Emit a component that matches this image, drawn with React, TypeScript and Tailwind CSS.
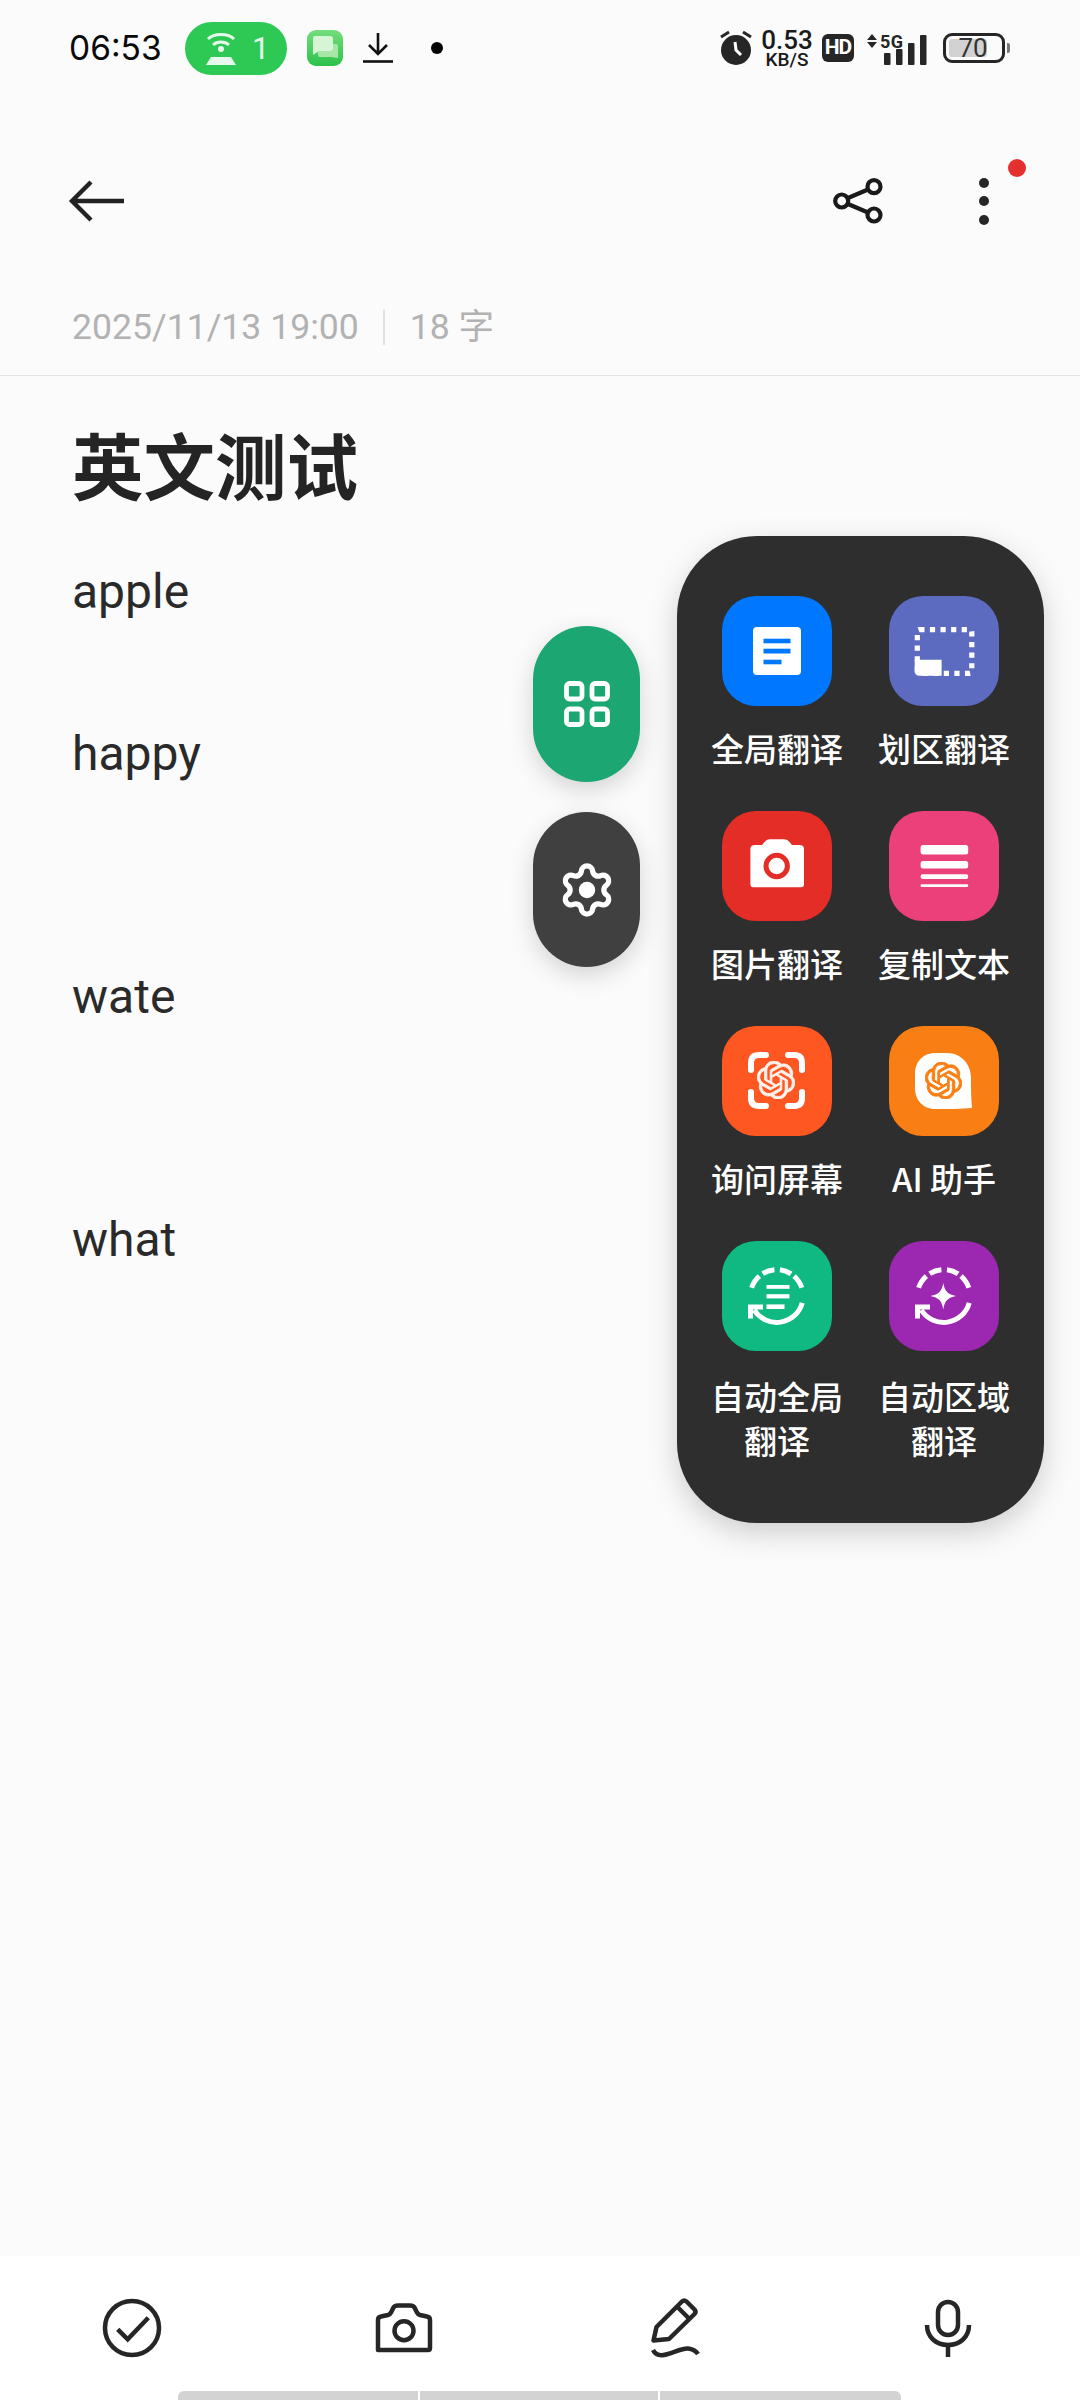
import React from "react";
import { SiOpenai } from "react-icons/si";

const R = 26.4;
function pt(a: number) {
  const t = (a * Math.PI) / 180;
  return `${(54.7 + R * Math.sin(t)).toFixed(2)} ${(55 - R * Math.cos(t)).toFixed(2)}`;
}
function arc(a: number, b: number) {
  const large = Math.abs(b - a) > 180 ? 1 : 0;
  return `M${pt(a)} A${R} ${R} 0 ${large} 1 ${pt(b)}`;
}

function AutoRing() {
  return (
    <g fill="none" stroke="#fff" strokeWidth="5">
      <path d={arc(-72, -41)} />
      <path d={arc(-32, -5)} />
      <path d={arc(7, 33)} />
      <path d={arc(41, 72)} />
      <path d={arc(105, 238)} />
      <path d="M28.5 77.5 V66 H41" strokeWidth="5" />
    </g>
  );
}

function Tile({ color, children }: { color: string; children: React.ReactNode }) {
  return (
    <div className={`relative w-[110px] h-[110px] rounded-[34px] flex items-center justify-center ${color}`}>
      <svg viewBox="0 0 110 110" className="absolute inset-0 w-[110px] h-[110px]">
        {children}
      </svg>
    </div>
  );
}

const items: { label: React.ReactNode; two?: boolean; tile: React.ReactNode }[] = [
  {
    label: "全局翻译",
    tile: (
      <Tile color="bg-[#0077ff]">
        <rect x="31" y="31" width="48" height="48" rx="4" fill="#fff" />
        <rect x="41.5" y="42.7" width="27" height="4.6" fill="#0077ff" />
        <rect x="41.5" y="52.7" width="27" height="4.8" fill="#0077ff" />
        <rect x="41.5" y="63.7" width="18" height="4.6" fill="#0077ff" />
      </Tile>
    ),
  },
  {
    label: "划区翻译",
    tile: (
      <Tile color="bg-[#5c6bc0]">
        <rect x="28.3" y="33.7" width="54.5" height="43.6" rx="2" fill="none" stroke="#fff" strokeWidth="5.2" strokeDasharray="5.2 5.4" />
        <path d="M25.7 63.7 H52.6 V79.7 H30.7 Q25.7 79.7 25.7 74.7 Z" fill="#fff" />
      </Tile>
    ),
  },
  {
    label: "图片翻译",
    tile: (
      <Tile color="bg-[#e52d27]">
        <path d="M28.4 38 Q28.4 34 33 34 H40 L43 30.5 Q45 28.3 48 28.3 H62 Q65 28.3 67 30.5 L70 34 H77.5 Q82 34 82 38 V73 Q82 76.3 79 76.3 H31 Q28.4 76.3 28.4 73 Z" fill="#fff" />
        <circle cx="54.7" cy="55" r="10.7" fill="#fff" stroke="#e52d27" strokeWidth="5" />
      </Tile>
    ),
  },
  {
    label: "复制文本",
    tile: (
      <Tile color="bg-[#ec407a]">
        <rect x="31.6" y="34" width="47.6" height="9.4" rx="2.5" fill="#fff" />
        <rect x="31.6" y="50" width="47.6" height="7.4" rx="2.5" fill="#fff" />
        <rect x="31.6" y="63.3" width="47.6" height="4.8" rx="2" fill="#fff" />
        <rect x="31.6" y="73.3" width="47.6" height="2.6" rx="1" fill="#fff" />
      </Tile>
    ),
  },
  {
    label: "询问屏幕",
    tile: (
      <Tile color="bg-[#ff5722]">
        <g fill="none" stroke="#fff" strokeWidth="6" strokeLinecap="round">
          <path d="M29 44 V37 Q29 29 37 29 H44" />
          <path d="M66 29 H72 Q80 29 80 37 V44" />
          <path d="M29 66 V72 Q29 80 37 80 H44" />
          <path d="M66 80 H72 Q80 80 80 72 V66" />
        </g>
        <foreignObject x="35" y="35" width="38" height="38">
          <SiOpenai className="w-[38px] h-[38px] text-[#fff3ee]" stroke="currentColor" strokeWidth={0.5} />
        </foreignObject>
      </Tile>
    ),
  },
  {
    label: "AI 助手",
    tile: (
      <Tile color="bg-[#f97f14]">
        <path d="M46 27 H58 C72 27 82 38 82 52 C82 62 82 72 83 82 C72 83 60 83 46 83 C34 83 26 74 26 62 V48 C26 36 34 27 46 27 Z" fill="#fff" />
        <foreignObject x="36" y="36" width="37" height="37">
          <SiOpenai className="w-[37px] h-[37px] text-[#f97f14]" stroke="currentColor" strokeWidth={0.6} />
        </foreignObject>
      </Tile>
    ),
  },
  {
    two: true,
    label: (
      <>
        自动全局
        <br />
        翻译
      </>
    ),
    tile: (
      <Tile color="bg-[#10b981]">
        <AutoRing />
        <rect x="44.5" y="44" width="23" height="3.8" fill="#fff" />
        <rect x="44.5" y="53.2" width="23" height="4.2" fill="#fff" />
        <rect x="44.5" y="63.4" width="18" height="4.6" fill="#fff" />
      </Tile>
    ),
  },
  {
    two: true,
    label: (
      <>
        自动区域
        <br />
        翻译
      </>
    ),
    tile: (
      <Tile color="bg-[#9c27b0]">
        <AutoRing />
        <path d="M54.3 42 C55.5 50 59 53.6 67 55 C59 56.4 55.5 60 54.3 68.5 C53 60 49.5 56.4 41.5 55 C49.5 53.6 53 50 54.3 42 Z" fill="#fff" />
      </Tile>
    ),
  },
];

function StatusBar() {
  return (
    <div className="h-[96px] flex items-center justify-between pl-[69px] pr-[75px] text-black">
      <div className="flex items-center">
        <span className="text-[33.5px] leading-[48px] w-[93px] whitespace-nowrap font-[Inter,sans-serif] text-[#0a0a0a]">06:53</span>
        <div className="ml-[23px] w-[102px] h-[53px] rounded-full bg-[#2ec955] flex items-center pl-[20px]">
          <svg viewBox="0 0 32 36" className="w-[32px] h-[36px]">
            <g fill="none" stroke="#e7f9ec" strokeWidth="3">
              <path d="M3 9 C9 3 23 3 29 9" />
              <path d="M8 15 C12 11 20 11 24 15" />
            </g>
            <circle cx="16" cy="19" r="3" fill="#e7f9ec" />
            <path d="M6 27 H26 L31 35 H1 Z" fill="#e7f9ec" />
          </svg>
          <span className="ml-[15px] text-[31px] leading-none text-[#e7f9ec] font-[Roboto,sans-serif]">1</span>
        </div>
        <svg viewBox="0 0 36 36" className="ml-[20px] w-[36px] h-[36px]">
          <defs>
            <linearGradient id="chatg" x1="0" y1="0" x2="0" y2="1">
              <stop offset="0" stopColor="#74dd7c" />
              <stop offset="1" stopColor="#2cc24a" />
            </linearGradient>
          </defs>
          <rect width="36" height="36" rx="9" fill="url(#chatg)" />
          <path d="M13 14 H29 Q31 14 31 16 V28 L24 27 H13 Q11 27 11 25 V16 Q11 14 13 14 Z" fill="#a8e6a8" />
          <path d="M8 6 H23 Q26 6 26 9 V18 Q26 21 23 21 H12 L6 25 V9 Q6 6 8 6 Z" fill="#d6f5d4" />
        </svg>
        <svg viewBox="0 0 30 32" className="ml-[20px] w-[30px] h-[32px]">
          <path d="M15 1 V21 M6 13 L15 22 L24 13" fill="none" stroke="#111" strokeWidth="2.6" />
          <path d="M0 29.5 H30" stroke="#111" strokeWidth="2.6" />
        </svg>
        <div className="ml-[38px] w-[12px] h-[12px] rounded-full bg-black" />
      </div>
      <div className="flex items-center">
        <svg viewBox="0 0 36 36" className="w-[36px] h-[36px]">
          <circle cx="18" cy="20" r="15" fill="#262626" />
          <path d="M3 7 L11 2 M33 7 L25 2" stroke="#262626" strokeWidth="3" />
          <path d="M17 12 L18 20 L23 25" stroke="#fff" strokeWidth="3" fill="none" />
        </svg>
        <div className="ml-[7px] w-[52px] flex flex-col items-center font-[Roboto,sans-serif] text-[#1a1a1a] font-medium">
          <span className="text-[26px] leading-[22px] whitespace-nowrap">0.53</span>
          <span className="text-[19px] leading-[17px] whitespace-nowrap">KB/S</span>
        </div>
        <div className="ml-[9px] w-[32px] h-[28px] rounded-[6px] bg-[#262626] flex items-center justify-center text-white text-[21px] font-bold tracking-[-1px] font-[Roboto,sans-serif]">HD</div>
        <svg viewBox="0 -4 62 38" className="ml-[13px] w-[62px] h-[38px]">
          <path d="M5 1 L10 7 H0 Z M5 15 L10 9 H0 Z" fill="#262626" />
          <text x="13" y="15" fontSize="18" fontWeight="700" fill="#262626" fontFamily="Roboto, sans-serif" textLength="23">5G</text>
          <rect x="17" y="20" width="6.5" height="12" rx="1" fill="#262626" />
          <rect x="29" y="16" width="6.5" height="16" rx="1" fill="#262626" />
          <rect x="41" y="10" width="6.5" height="22" rx="1" fill="#262626" />
          <rect x="53" y="2" width="6.5" height="30" rx="1" fill="#262626" />
        </svg>
        <div className="relative ml-[14px] w-[62px] h-[30px] rounded-[9px] border-[3px] border-[#262626] font-[Roboto,sans-serif]">
          <div className="absolute left-[3px] top-[3px] bottom-[3px] w-[38px] bg-[#d2d2d2] rounded-[3px]" />
          <span className="absolute left-[9px] top-0 text-[26px] leading-[24px] text-[#333] w-[36px] text-center">70</span>
          <div className="absolute right-[-8px] top-[7px] w-[3px] h-[10px] bg-[#777] rounded-r-[2px]" />
        </div>
      </div>
    </div>
  );
}

export default function App() {
  return (
    <div className="relative w-[1080px] h-[2400px] overflow-hidden bg-[#fbfbfb] flex flex-col font-[Roboto,'Noto_Sans_CJK_SC',sans-serif] text-[#222]">
      <StatusBar />

      <div className="h-[210px] flex items-center justify-between pl-[66px] pr-[88px]">
        <svg viewBox="0 0 60 44" className="w-[60px] h-[44px]">
          <path d="M58 22 H6 M25 3 L6 22 L25 41" fill="none" stroke="#222" strokeWidth="4.4" />
        </svg>
        <div className="flex items-center">
          <svg viewBox="0 0 56 56" className="w-[56px] h-[56px]">
            <g fill="none" stroke="#1a1a1a" strokeWidth="4.2">
              <circle cx="11.7" cy="28" r="6.5" />
              <circle cx="44" cy="13.7" r="6.5" />
              <circle cx="44" cy="42" r="6.5" />
              <path d="M18 25 L38 16.5 M18 31 L38 39.5" />
            </g>
          </svg>
          <div className="relative ml-[92px] w-[12px] flex flex-col items-center gap-[8.5px] mr-[2px]">
            <div className="w-[10px] h-[10px] rounded-full bg-[#262626]" />
            <div className="w-[10px] h-[10px] rounded-full bg-[#262626]" />
            <div className="w-[10px] h-[10px] rounded-full bg-[#262626]" />
            <div className="absolute left-[30px] top-[-19px] w-[18px] h-[18px] rounded-full bg-[#e53030]" />
          </div>
        </div>
      </div>

      <div className="h-[70px] border-b border-[#e4e4e4] box-border flex items-start pl-[72px] pt-[1px] text-[35.6px] leading-[40px] text-[#b2b2b2]">
        <span className="whitespace-nowrap">2025/11/13 19:00</span>
        <div className="ml-[24px] mt-[2px] w-[2px] h-[36px] bg-[#e2e2e2]" />
        <span className="ml-[25px] whitespace-nowrap">18 字</span>
      </div>

      <div className="flex-1 pl-[72px]">
        <h1 className="mt-[42px] text-[71.5px] leading-[90px] font-semibold text-[#242424] font-['Noto_Sans_CJK_SC',sans-serif]">英文测试</h1>
        <div className="mt-[43px] text-[48px] leading-[81px] text-[#2a2a2a]">
          <p>apple</p>
          <p className="h-[81px]" />
          <p>happy</p>
          <p className="h-[162px]" />
          <p>wate</p>
          <p className="h-[162px]" />
          <p>what</p>
        </div>
      </div>

      <div className="relative h-[144px] bg-white">
        <div className="ml-[-4px] h-full grid grid-cols-[repeat(4,272px)] items-center justify-items-center">
          <svg viewBox="0 0 64 64" className="w-[64px] h-[64px]">
            <g fill="none" stroke="#262626" strokeWidth="4.5">
              <circle cx="32" cy="32" r="27" />
              <path d="M17.7 33.3 L27.7 43.3 L48.3 21.7" />
            </g>
          </svg>
          <svg viewBox="0 0 64 64" className="w-[64px] h-[64px]">
            <g fill="none" stroke="#262626" strokeWidth="4.5">
              <path d="M6 54 V24 q0-3 3-3.5 l7-1.5 q2-.5 3-2.5 l2-4 q1-3 5-3 h12 q4 0 5 3 l2 4 q1 2 3 2.5 l7 1.5 q3 .5 3 3.5 V52 q0 2-2 2 Z" strokeLinejoin="round" />
              <circle cx="32" cy="34.7" r="9.5" />
            </g>
          </svg>
          <svg viewBox="0 0 64 64" className="w-[64px] h-[64px]">
            <g fill="none" stroke="#262626" strokeWidth="4.5">
              <path d="M9.5 44.5 L12.5 31 L38 5.5 q2 -2 4.5 0 l8 8 q2 2.5 0 4.5 L25 43 Z" strokeLinejoin="round" />
              <path d="M33.5 11 L45 22.5" />
              <path d="M9 54 C12 60 18 60 24 58 C32 56 38 52 44 52.5 C49 53 52 55 54 58" />
            </g>
          </svg>
          <svg viewBox="0 0 64 64" className="w-[64px] h-[64px]">
            <g fill="none" stroke="#262626" strokeWidth="4.5">
              <rect x="22" y="6" width="20" height="33" rx="10" />
              <path d="M11 29 C11 41 20 49 32 49 C44 49 53 41 53 29" />
              <path d="M32 49 V61" />
            </g>
          </svg>
        </div>
        <div className="absolute left-[178px] top-[135px] w-[723px] h-[9px] rounded-t-[6px] flex gap-[2px] overflow-hidden">
          <div className="w-[240px] bg-[#d3d3d3]" />
          <div className="w-[238px] bg-[#d3d3d3]" />
          <div className="flex-1 bg-[#d3d3d3]" />
        </div>
      </div>

      <div className="absolute left-[533px] top-[626px] w-[107px] h-[156px] rounded-full bg-[#1ba672] shadow-[0_8px_24px_rgba(0,0,0,0.16)] flex items-center justify-center">
        <svg viewBox="0 0 46 46" className="w-[46px] h-[46px]">
          <g fill="none" stroke="#fff" strokeWidth="4.8">
            <rect x="2.5" y="2.5" width="15.5" height="15.5" rx="3" />
            <rect x="28" y="2.5" width="15.5" height="15.5" rx="3" />
            <rect x="2.5" y="28" width="15.5" height="15.5" rx="3" />
            <rect x="28" y="28" width="15.5" height="15.5" rx="3" />
          </g>
        </svg>
      </div>
      <div className="absolute left-[533px] top-[812px] w-[107px] h-[155px] rounded-full bg-[#404040] shadow-[0_8px_24px_rgba(0,0,0,0.16)] flex items-center justify-center">
        <svg viewBox="0 0 24 24" className="w-[58px] h-[58px]">
          <path d="M9.671 4.136a2.34 2.34 0 0 1 4.659 0 2.34 2.34 0 0 0 3.319 1.915 2.34 2.34 0 0 1 2.33 4.033 2.34 2.34 0 0 0 0 3.831 2.34 2.34 0 0 1-2.33 4.033 2.34 2.34 0 0 0-3.319 1.915 2.34 2.34 0 0 1-4.659 0 2.34 2.34 0 0 0-3.32-1.915 2.34 2.34 0 0 1-2.33-4.033 2.34 2.34 0 0 0 0-3.831A2.34 2.34 0 0 1 6.35 6.051a2.34 2.34 0 0 0 3.319-1.915" fill="none" stroke="#fff" strokeWidth="2.2" />
          <circle cx="12" cy="12" r="3.4" fill="#fff" />
        </svg>
      </div>

      <div className="absolute left-[677px] top-[536px] w-[367px] rounded-[80px] bg-[#2e2e2e] shadow-[0_10px_30px_rgba(0,0,0,0.18)] px-[16.5px] pt-[60px] pb-[61px] grid grid-cols-2 gap-y-[41px] font-['Noto_Sans_CJK_SC',sans-serif]">
        {items.map((it, i) => (
          <div key={i} className="flex flex-col items-center">
            {it.tile}
            <div className={`${it.two ? "mt-[23px]" : "mt-[20px]"} text-[33px] leading-[44px] font-medium text-white text-center whitespace-nowrap`}>{it.label}</div>
          </div>
        ))}
      </div>
    </div>
  );
}
